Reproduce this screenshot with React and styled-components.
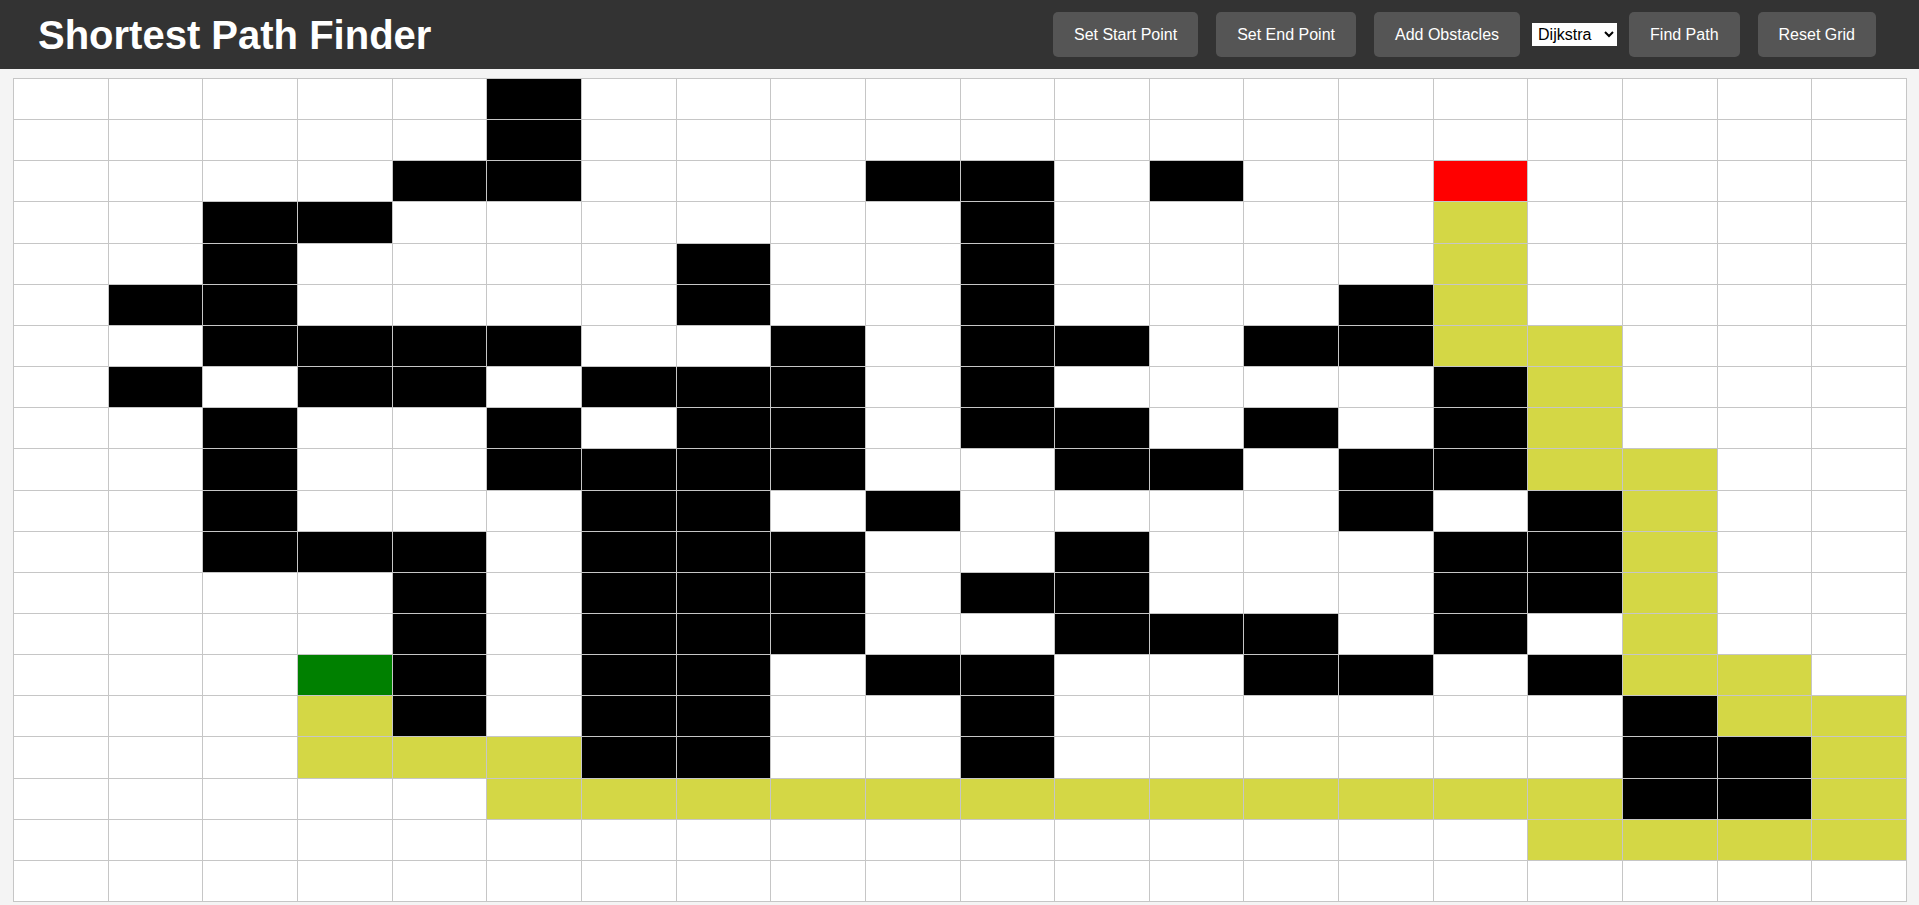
import styled, { createGlobalStyle } from "styled-components";

const GlobalStyle = createGlobalStyle`
  html, body {
    margin: 0;
    padding: 0;
    background-color: #f4f4f4;
    font-family: "Liberation Sans", Arial, sans-serif;
  }
`;

const Header = styled.header`
  height: 69px;
  background-color: #333;
  display: flex;
  align-items: center;
  justify-content: space-between;
  padding: 0 34px 0 38px;
`;

const Title = styled.h1`
  margin: 0;
  color: #fff;
  font-size: 40px;
  font-weight: bold;
  line-height: 1;
`;

const Controls = styled.div`
  display: flex;
  align-items: center;
`;

const Button = styled.button`
  height: 45px;
  padding: 0 21px;
  margin: 0 9px;
  border: none;
  border-radius: 5px;
  background-color: #555;
  color: #fff;
  font-family: "Liberation Sans", Arial, sans-serif;
  font-size: 16px;
  cursor: pointer;
`;

const Select = styled.select`
  width: 85px;
  height: 23px;
  margin: 0 3px;
  padding: 0 0 0 2px;
  border: none;
  border-radius: 0;
  background-color: #fff;
  color: #000;
  font-family: "Liberation Sans", Arial, sans-serif;
  font-size: 16px;
`;

const Grid = styled.div`
  margin: 9px 12px 0 13px;
  height: 824px;
  display: grid;
  grid-template-columns: repeat(20, 1fr);
  grid-template-rows: repeat(20, 1fr);
  gap: 1px;
  padding: 1px;
  box-sizing: border-box;
  background-color: #c6c6c6;
`;

const cellColors = {
  ".": "#fff",
  "#": "#000",
  S: "#008000",
  E: "#ff0000",
  p: "#d4d745",
};

const Cell = styled.div`
  background-color: ${(props) => cellColors[props.kind]};
`;

// . empty, # wall, S start, E end, p path
const layout = [
  ".....#..............",
  ".....#..............",
  "....##...##.#..E....",
  "..##......#....p....",
  "..#....#..#....p....",
  ".##....#..#...#p....",
  "..####..#.##.##pp...",
  ".#.##.###.#....#p...",
  "..#..#.##.##.#.#p...",
  "..#..####..##.##pp..",
  "..#...##.#....#.#p..",
  "..###.###..#...##p..",
  "....#.###.##...##p..",
  "....#.###..###.#.p..",
  "...S#.##.##..##.#pp.",
  "...p#.##..#......#pp",
  "...ppp##..#......##p",
  ".....pppppppppppp##p",
  "................pppp",
  "....................",
];

const App = () => {
  return (
    <>
      <GlobalStyle />
      <Header>
        <Title>Shortest Path Finder</Title>
        <Controls>
          <Button>Set Start Point</Button>
          <Button>Set End Point</Button>
          <Button>Add Obstacles</Button>
          <Select defaultValue="dijkstra">
            <option value="dijkstra">Dijkstra</option>
            <option value="astar">A*</option>
          </Select>
          <Button>Find Path</Button>
          <Button>Reset Grid</Button>
        </Controls>
      </Header>
      <Grid>
        {layout.map((row, r) =>
          row.split("").map((kind, c) => <Cell key={`${r}-${c}`} kind={kind} />)
        )}
      </Grid>
    </>
  );
};

export default App;
